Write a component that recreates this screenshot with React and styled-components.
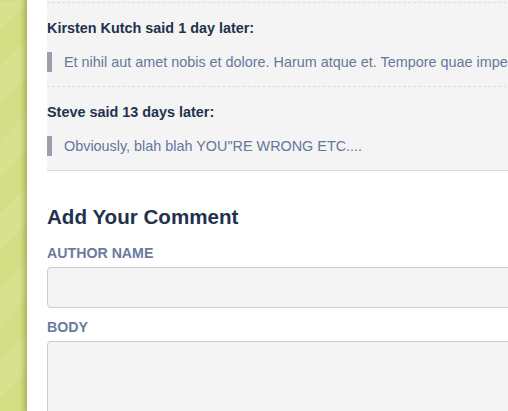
import React from "react";
import styled, { createGlobalStyle } from "styled-components";

const Global = createGlobalStyle`
  html, body { margin: 0; padding: 0; overflow: hidden; background: #fff; }
  body { font-family: "Liberation Sans", Arial, Helvetica, sans-serif; }
`;

const Page = styled.div`
  display: flex;
  min-height: 100vh;
  width: 100vw;
  overflow: hidden;
`;

const Sidebar = styled.aside`
  flex: 0 0 27px;
  background: repeating-linear-gradient(
    -45deg,
    #d4de84 0px,
    #d4de84 26px,
    #d8e18d 26px,
    #d8e18d 52px
  );
  box-shadow: inset -6px 0 5px -3px rgba(90, 100, 20, 0.35);
`;

const Main = styled.main`
  flex: 1;
  min-width: 0;
  padding-left: 20px;
  overflow: hidden;
`;

const Column = styled.div`
  width: 700px;
`;

const CommentList = styled.section`
  background: #f4f4f4;
  padding-top: 2px;
  border-bottom: 1px solid #dadada;
`;

const Comment = styled.article`
  border-top: 1px dashed #dcdcdc;
  padding: 15px 0 14px;
`;

const Author = styled.h4`
  margin: 0 0 14px;
  font-size: 14.4px;
  line-height: 20px;
  font-weight: bold;
  color: #22324c;
`;

const Quote = styled.blockquote`
  margin: 0;
  border-left: 5px solid #9aa1ac;
  padding-left: 12px;
  font-size: 14.4px;
  line-height: 20px;
  color: #66779a;
  white-space: nowrap;
`;

const Heading = styled.h2`
  margin: 34px 0 14px;
  font-size: 20.6px;
  line-height: 24px;
  font-weight: bold;
  color: #22324c;
`;

const Label = styled.label`
  display: block;
  margin: ${(p) => (p.$first ? "0" : "9px")} 0 4px;
  font-size: 14.2px;
  line-height: 20px;
  font-weight: bold;
  text-transform: uppercase;
  color: #6a7b9c;
`;

const Field = styled.input`
  display: block;
  box-sizing: border-box;
  width: 100%;
  height: ${(p) => p.$h}px;
  margin: 0;
  border: 1px solid #cccccc;
  border-radius: 4px;
  background: #f4f4f4;
  font: inherit;
  outline: none;
`;

const comments = [
  {
    who: "Kirsten Kutch said 1 day later:",
    body: "Et nihil aut amet nobis et dolore. Harum atque et. Tempore quae impedit voluptas.",
  },
  {
    who: "Steve said 13 days later:",
    body: 'Obviously, blah blah YOU"RE WRONG ETC....',
  },
];

export default function App() {
  return (
    <>
      <Global />
      <Page>
        <Sidebar />
        <Main>
          <Column>
            <CommentList>
              {comments.map((c) => (
                <Comment key={c.who}>
                  <Author>{c.who}</Author>
                  <Quote>{c.body}</Quote>
                </Comment>
              ))}
            </CommentList>
            <Heading>Add Your Comment</Heading>
            <Label $first>Author Name</Label>
            <Field $h={41} />
            <Label>Body</Label>
            <Field as="textarea" $h={140} />
          </Column>
        </Main>
      </Page>
    </>
  );
}
